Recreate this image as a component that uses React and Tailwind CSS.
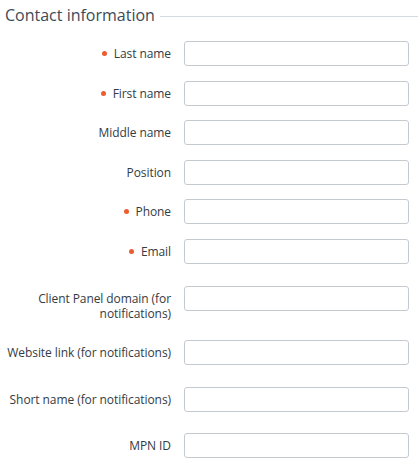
import React from 'react';

const fields = [
  { label: 'Last name', required: true, h: 'h-[40px]' },
  { label: 'First name', required: true, h: 'h-[39px]' },
  { label: 'Middle name', h: 'h-[40px]' },
  { label: 'Position', h: 'h-[39px]' },
  { label: 'Phone', required: true, h: 'h-[40px]' },
  { label: 'Email', required: true, h: 'h-[47px]' },
  { label: 'Client Panel domain (for notifications)', h: 'h-[54px]' },
  { label: 'Website link (for notifications)', h: 'h-[47px]' },
  { label: 'Short name (for notifications)', h: 'h-[46px]' },
  { label: 'MPN ID', h: 'h-[30px]' },
];

const Field = ({ label, required, h }) => (
  <div className={`flex items-start ${h}`}>
    <div className="w-[171px] shrink-0 pt-[5px] text-right text-[12px] leading-[15px] text-[#333b44] tracking-[-0.08px]">
      {required && (
        <span className="inline-block w-[5px] h-[5px] rounded-full bg-[#ee5b2f] mr-[7px] align-middle relative -top-[1px]"></span>
      )}
      {label}
    </div>
    <input
      type="text"
      className="ml-[13px] w-[225px] h-[25px] border border-[#c5cad0] rounded-[3px] bg-white outline-none px-2 text-[12px]"
    />
  </div>
);

const App = () => {
  return (
    <div className="w-[418px] h-[465px] bg-white overflow-hidden" style={{ fontFamily: '"Open Sans", sans-serif' }}>
      <div className="flex items-center pl-[5px] pt-[3px] h-[27px]">
        <h2 className="text-[16px] leading-[22px] text-[#3d4a58] whitespace-nowrap">Contact information</h2>
        <div className="flex-1 h-px bg-[#d5dae1] ml-[5px] mt-[3px]"></div>
      </div>
      <div className="mt-[14px]">
        {fields.map((f) => (
          <Field key={f.label} {...f} />
        ))}
      </div>
    </div>
  );
};

export default App;
